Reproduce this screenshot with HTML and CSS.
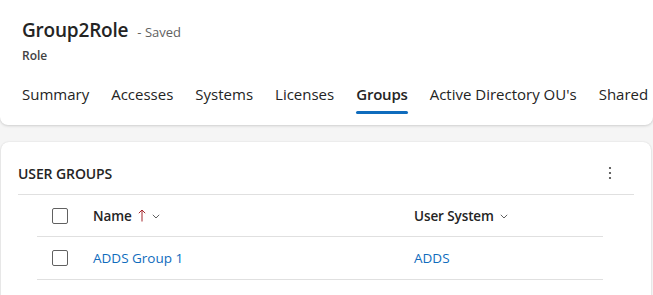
FILE: index.html
```html
<!DOCTYPE html>
<html>
<head>
<meta charset="utf-8">
<link rel="stylesheet" href="styles.css">
</head>
<body>
<header class="head-card">
  <div class="title-row">
    <h1 class="title">Group2Role</h1>
    <span class="saved">- Saved</span>
  </div>
  <div class="entity">Role</div>
  <nav class="tabs">
    <span class="tab">Summary</span>
    <span class="tab">Accesses</span>
    <span class="tab">Systems</span>
    <span class="tab">Licenses</span>
    <span class="tab active">Groups</span>
    <span class="tab">Active Directory OU's</span>
    <span class="tab">Shared</span>
  </nav>
</header>
<section class="card">
  <div class="card-head">
    <h2 class="card-title">USER GROUPS</h2>
    <button class="more" aria-label="More">
      <svg width="4" height="14" viewBox="0 0 4 14"><circle cx="2" cy="2" r="1.1" fill="#424242"/><circle cx="2" cy="7" r="1.1" fill="#424242"/><circle cx="2" cy="12" r="1.1" fill="#424242"/></svg>
    </button>
  </div>
  <div class="grid">
    <div class="row header">
      <div class="cell c-check"><span class="checkbox"></span></div>
      <div class="cell c-name"><span class="hdr">Name</span><svg class="sort" width="8" height="13" viewBox="0 0 8 13"><path d="M4 12.5 V1 M0.8 4.2 L4 1 L7.2 4.2" fill="none" stroke="#a4262c" stroke-width="1"/></svg><svg class="chev" width="8" height="5" viewBox="0 0 8 5"><path d="M0.8 0.8 L4 4 L7.2 0.8" fill="none" stroke="#616161" stroke-width="1"/></svg></div>
      <div class="cell c-sys"><span class="hdr">User System</span><svg class="chev" width="8" height="5" viewBox="0 0 8 5"><path d="M0.8 0.8 L4 4 L7.2 0.8" fill="none" stroke="#616161" stroke-width="1"/></svg></div>
    </div>
    <div class="row">
      <div class="cell c-check"><span class="checkbox"></span></div>
      <div class="cell c-name"><a class="link">ADDS Group 1</a></div>
      <div class="cell c-sys"><a class="link">ADDS</a></div>
    </div>
  </div>
</section>
</body>
</html>
```
FILE: styles.css
```css
* { box-sizing: border-box; }
body {
  margin: 0;
  background: #f5f5f5;
  font-family: "Open Sans", "Noto Sans", sans-serif;
  color: #242424;
}
.head-card {
  background: #fff;
  height: 125px;
  border-radius: 0 0 8px 8px;
  box-shadow: 0 1px 3px rgba(0,0,0,0.14), 0 0 2px rgba(0,0,0,0.08);
  padding: 17px 0 0 22px;
}
.title-row {
  display: flex;
  align-items: baseline;
  height: 30px;
}
.title {
  margin: 0;
  font-size: 19px;
  font-weight: 600;
  letter-spacing: -0.2px;
}
.saved {
  margin-left: 9px;
  font-size: 13px;
  color: #616161;
}
.entity {
  font-size: 12px;
  font-weight: 600;
  color: #424242;
  margin-top: 0;
  height: 18px;
}
.tabs {
  display: flex;
  margin-left: -11px;
  margin-top: 11px;
}
.tab {
  position: relative;
  font-size: 15px;
  padding: 8px 11px 14px;
  color: #242424;
  white-space: nowrap;
}
.tab.active {
  font-weight: 600;
  letter-spacing: -0.2px;
}
.tab.active::after {
  content: "";
  position: absolute;
  left: 11px;
  right: 11px;
  bottom: 4px;
  height: 3px;
  border-radius: 2px;
  background: #0f6cbd;
}
.card {
  margin: 17px 2px 0 1px;
  background: #fff;
  border-radius: 8px 8px 0 0;
  box-shadow: 0 0 2px rgba(0,0,0,0.12), 0 1px 2px rgba(0,0,0,0.1);
  padding: 20px 17px 0 17px;
  height: 160px;
}
.card-head {
  display: flex;
  align-items: center;
  justify-content: space-between;
  height: 22px;
  padding-bottom: 10px;
  box-sizing: content-box;
  border-bottom: 1px solid #e0e0e0;
}
.card-title {
  margin: 0;
  font-size: 14px;
  font-weight: 600;
  letter-spacing: -0.1px;
}
.more {
  border: 0;
  background: none;
  width: 24px;
  height: 22px;
  margin-right: 12px;
  display: flex;
  align-items: center;
  justify-content: center;
  padding: 0;
}
.grid {
  margin-left: 19px;
  width: 566px;
}
.row {
  display: grid;
  grid-template-columns: 44px 321px 201px;
  height: 42px;
}
.row + .row { height: 43px; }
.cell {
  display: flex;
  align-items: center;
  border-bottom: 1px solid #e0e0e0;
  font-size: 13.5px;
}
.c-check { justify-content: flex-start; padding-left: 15px; }
.c-name { padding-left: 12px; }
.c-sys { padding-left: 12px; }
.checkbox {
  width: 16px;
  height: 16px;
  border: 1px solid #616161;
  border-radius: 2px;
}
.hdr { font-weight: 600; letter-spacing: -0.1px; }
.sort { margin-left: 6px; margin-top: -1px; }
.chev { margin-left: 6px; margin-top: 1px; }
.link {
  color: #0f6cbd;
}
```
